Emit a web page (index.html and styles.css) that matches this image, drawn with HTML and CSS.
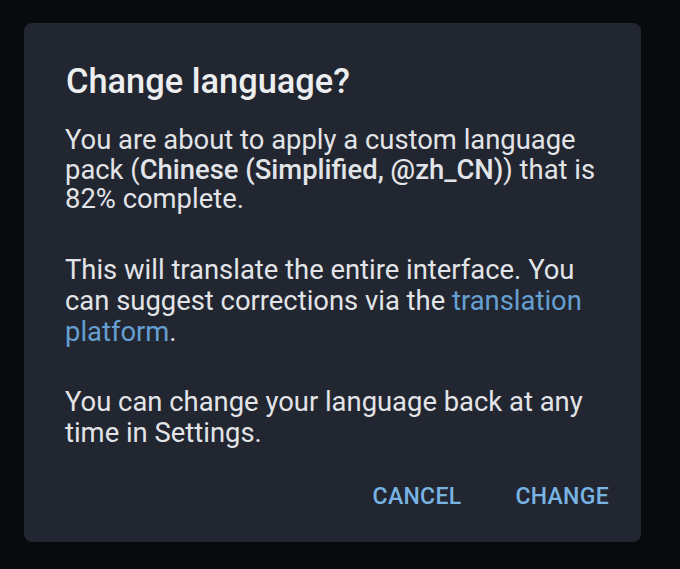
FILE: index.html
```html
<!DOCTYPE html>
<html>
<head>
<meta charset="utf-8">
<link rel="stylesheet" href="styles.css">
</head>
<body>
<div class="dialog">
  <h1 class="title">Change language?</h1>
  <p class="para first">You are about to apply a custom language<br>pack (<b>Chinese (Simplified, @zh_CN)</b>) that is<br>82% complete.</p>
  <p class="para">This will translate the entire interface. You<br>can suggest corrections via the <span class="link">translation<br>platform</span>.</p>
  <p class="para last">You can change your language back at any<br>time in Settings.</p>
  <div class="actions">
    <span class="btn">CANCEL</span>
    <span class="btn">CHANGE</span>
  </div>
</div>
</body>
</html>
```
FILE: styles.css
```css
html, body {
  margin: 0;
  padding: 0;
  background: #090a0d;
  width: 680px;
  height: 569px;
  overflow: hidden;
}
body {
  padding: 23px 0 0 24px;
  box-sizing: border-box;
  font-family: Roboto, "Liberation Sans", sans-serif;
}
.dialog {
  width: 617px;
  height: 519px;
  box-sizing: border-box;
  background: #212631;
  border-radius: 8px;
  padding: 38px 16px 0 41px;
  color: #e2e4e7;
}
.title {
  margin: 0 0 25px 1px;
  font-size: 34.4px;
  font-weight: 500;
  line-height: 40px;
  color: #eceef0;
  white-space: nowrap;
}
.para {
  margin: 0 0 39px 0;
  font-size: 27.4px;
  line-height: 31px;
  font-weight: 400;
  white-space: nowrap;
}
.para.first {
  line-height: 29.5px;
  margin-bottom: 40.5px;
}
.para.last {
  margin-bottom: 0;
}
.para b {
  font-weight: 500;
}
.link {
  color: #66a0d2;
}
.actions {
  display: flex;
  justify-content: flex-end;
  gap: 54px;
  margin-top: 34px;
  padding-right: 16px;
}
.btn {
  font-size: 23px;
  line-height: 27px;
  font-weight: 500;
  color: #78b3e2;
  letter-spacing: 0.3px;
}
```
